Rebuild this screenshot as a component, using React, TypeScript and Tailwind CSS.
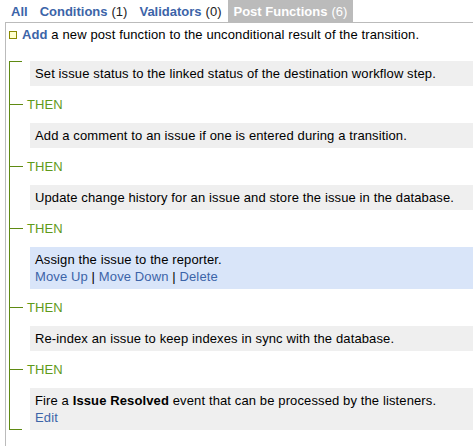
import type { ReactNode } from 'react';

type Step = { text: ReactNode; links?: string[]; active?: boolean };

const STEPS: Step[] = [
  { text: 'Set issue status to the linked status of the destination workflow step.' },
  { text: 'Add a comment to an issue if one is entered during a transition.' },
  { text: 'Update change history for an issue and store the issue in the database.' },
  { text: 'Assign the issue to the reporter.', links: ['Move Up', 'Move Down', 'Delete'], active: true },
  { text: 'Re-index an issue to keep indexes in sync with the database.' },
  {
    text: (
      <>
        Fire a <b>Issue Resolved</b> event that can be processed by the listeners.
      </>
    ),
    links: ['Edit'],
  },
];

function Tab({ label, count, active }: { label: string; count?: number; active?: boolean }) {
  if (active) {
    return (
      <li className="flex h-[22px] items-center bg-[#bbbbbb] px-[6px] text-white">
        <span className="font-bold">{label}</span>
        {count !== undefined && <span className="ml-[4px]">({count})</span>}
      </li>
    );
  }
  return (
    <li className="flex h-[22px] items-center px-[6px]">
      <a className="font-bold text-[#3c64a8]">{label}</a>
      {count !== undefined && <span className="ml-[4px] text-[#222]">({count})</span>}
    </li>
  );
}

function StepBox({ step }: { step: Step }) {
  return (
    <div className={`ml-[20px] flex-1 py-[4px] pl-[5px] ${step.active ? 'bg-[#d9e5f9]' : 'bg-[#efefef]'}`}>
      <p>{step.text}</p>
      {step.links && (
        <p>
          {step.links.map((l, i) => (
            <span key={l}>
              {i > 0 && <span className="text-black"> | </span>}
              <a className="text-[#3c64a8]">{l}</a>
            </span>
          ))}
        </p>
      )}
    </div>
  );
}

export default function App() {
  return (
    <div className="h-[446px] w-[473px] overflow-hidden bg-white font-['Liberation_Sans',Arial,sans-serif] text-[13px] leading-[17px] text-black">
      <ul className="flex pl-[5px]">
        <Tab label="All" />
        <Tab label="Conditions" count={1} />
        <Tab label="Validators" count={0} />
        <Tab label="Post Functions" count={6} active />
      </ul>

      <div className="ml-[5px] h-[424px] border-l border-t border-[#bbbbbb] tracking-[0.12px]">
        {/* Add link */}
        <div className="flex items-center pt-[3px] pl-[3px]">
          <span className="mr-[5px] inline-block h-[8px] w-[8px] border border-[#8a8a00] bg-[#ffffcc]" />
          <span>
            <a className="font-bold text-[#3c64a8]">Add</a> a new post function to the unconditional result of the transition.
          </span>
        </div>

        {/* Steps */}
        <div className="ml-[3px] mt-[18px] border-l border-[#5f8a12]">
          {STEPS.map((step, i) => {
            const first = i === 0;
            const last = i === STEPS.length - 1;
            return (
              <div key={i}>
                {!first && (
                  <div className="mb-[10px] mt-[9px] flex h-[18px] items-center">
                    <span className="h-px w-[13px] bg-[#5f8a12]" />
                    <span className="ml-[4px] text-[#5f9a1b]">THEN</span>
                  </div>
                )}
                <div className="flex">
                  <span
                    className={`h-px w-[12px] bg-[#5f8a12] ${first ? 'self-start' : last ? 'self-end' : 'invisible'}`}
                  />
                  <div className="-ml-[12px] flex flex-1">
                    <StepBox step={step} />
                  </div>
                </div>
              </div>
            );
          })}
        </div>
      </div>
    </div>
  );
}
